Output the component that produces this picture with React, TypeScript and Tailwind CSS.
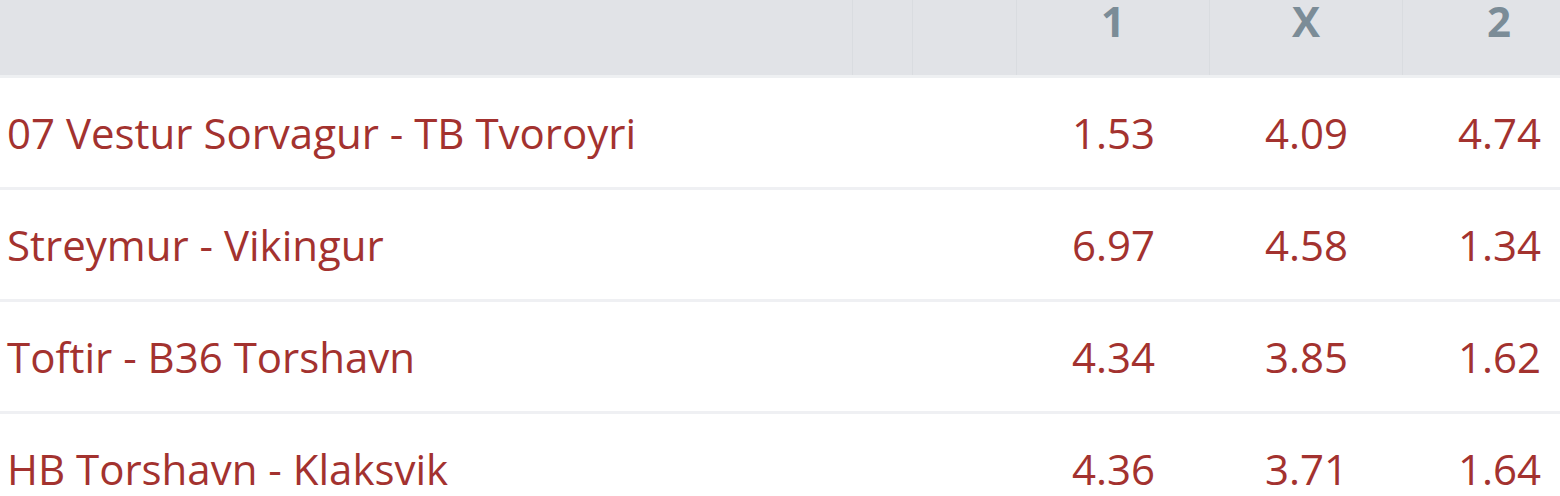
import React from "react";

const rows = [
  { name: "07 Vestur Sorvagur - TB Tvoroyri", o: ["1.53", "4.09", "4.74"] },
  { name: "Streymur - Vikingur", o: ["6.97", "4.58", "1.34"] },
  { name: "Toftir - B36 Torshavn", o: ["4.34", "3.85", "1.62"] },
  { name: "HB Torshavn - Klaksvik", o: ["4.36", "3.71", "1.64"] },
];

export default function App() {
  return (
    <div
      className="w-[1560px] h-[496px] overflow-hidden bg-white"
      style={{ fontFamily: '"Open Sans", "Noto Sans", sans-serif' }}
    >
      <div className="w-[1596px]">
        <div className="grid grid-cols-[853px_60px_104px_193px_193px_193px] h-[75px] bg-[#e1e3e7] border-b-[3px] border-[#eef0f2] box-content">
          <div className="border-r border-[#d9dce0]" />
          <div className="border-r border-[#d9dce0]" />
          <div className="border-r border-[#d9dce0]" />
          {["1", "X", "2"].map((h) => (
            <div
              key={h}
              className="border-r border-[#d9dce0] flex justify-center pt-[-2px] text-[42px] font-bold leading-[42px] text-[#7b8c97] pt-0"
            >
              {h}
            </div>
          ))}
        </div>
        {rows.map((r) => (
          <div
            key={r.name}
            className="grid grid-cols-[1017px_193px_193px_193px] h-[109px] border-b-[3px] border-[#eff0f3] box-content items-center text-[42px] text-[#a3322f]"
          >
            <div className="pl-[7px] leading-none">{r.name}</div>
            {r.o.map((v, i) => (
              <div key={i} className="text-center leading-none">
                {v}
              </div>
            ))}
          </div>
        ))}
      </div>
    </div>
  );
}
